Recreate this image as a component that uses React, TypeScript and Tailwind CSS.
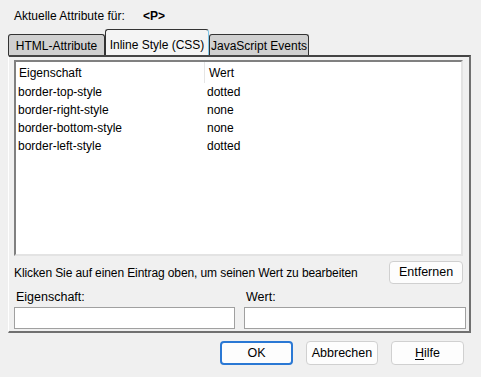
const rows = [
  { name: "border-top-style", value: "dotted" },
  { name: "border-right-style", value: "none" },
  { name: "border-bottom-style", value: "none" },
  { name: "border-left-style", value: "dotted" },
];

const font = { fontFamily: '"Liberation Sans", Arial, sans-serif' };

const App = () => {
  return (
    <div
      className="relative w-[481px] h-[377px] bg-[#f0f0f0] text-[12px] text-black overflow-hidden whitespace-nowrap"
      style={font}
    >
      {/* header */}
      <div className="flex items-center h-[16px] mt-[8px] pl-[14px]">
        <span className="w-[129px]">Aktuelle Attribute für:</span>
        <span className="font-bold">&lt;P&gt;</span>
      </div>

      {/* tabs */}
      <div className="flex items-end h-[26px] mt-[5px] pl-[8px] relative z-10">
        <div className="h-[21px] w-[97px] flex items-center justify-center bg-[#d0d0d0] border border-b-0 border-[#333] rounded-t-[3px] text-[12px] pt-[2px]">
          HTML-Attribute
        </div>
        <div className="h-[26px] w-[104px] flex items-center justify-center bg-[#f4f4f4] border border-b-0 border-[#333] border-r-[#7fc6e8] rounded-t-[3px] text-[12px] pt-[5px]">
          Inline Style (CSS)
        </div>
        <div className="h-[21px] w-[100px] flex items-center justify-center bg-[#d0d0d0] border border-b-0 border-[#333] rounded-t-[3px] text-[12px] pt-[2px]">
          JavaScript Events
        </div>
      </div>

      {/* panel */}
      <div className="ml-[8px] w-[463px] h-[278px] border-t-[2px] border-t-[#444] border-l border-l-white border-r-[2px] border-r-[#707070] border-b-[2px] border-b-[#707070] px-[5px] pt-[3px]">
        {/* list */}
        <div className="w-[449px] h-[196px] bg-white border-t-[2px] border-t-[#808080] border-l-[2px] border-l-[#808080] border-r-[2px] border-r-[#e3e3e3] border-b-[2px] border-b-[#e3e3e3]">
          <div className="flex h-[21px] items-center">
            <div className="w-[189px] pl-[3px] h-full flex items-center border-r border-[#e5e5e5]">Eigenschaft</div>
            <div className="pl-[4px]">Wert</div>
          </div>
          {rows.map((row, index) => (
            <div key={index} className="flex h-[18px] items-center">
              <div className="w-[190px] pl-[2px]">{row.name}</div>
              <div className="pl-[1px]">{row.value}</div>
            </div>
          ))}
        </div>

        {/* hint + remove */}
        <div className="flex items-center justify-between h-[23px] mt-[5px] pr-[1px]">
          <span className="text-[12px] tracking-[-0.1px]">Klicken Sie auf einen Eintrag oben, um seinen Wert zu bearbeiten</span>
          <button className="w-[74px] h-[23px] bg-[#fdfdfd] border border-[#d0d0d0] rounded-[4px] text-[12.5px]">
            Entfernen
          </button>
        </div>

        {/* fields */}
        <div className="flex gap-[9px] mt-[4px]">
          <div className="flex flex-col">
            <span className="pl-[2px] h-[18px] text-[12.5px]">Eigenschaft:</span>
            <div className="w-[221px] h-[22px] bg-white border border-[#a0a0a0] mt-[1px]" />
          </div>
          <div className="flex flex-col">
            <span className="pl-[2px] h-[18px] text-[12.5px]">Wert:</span>
            <div className="w-[222px] h-[22px] bg-white border border-[#a0a0a0] mt-[1px]" />
          </div>
        </div>
      </div>

      {/* dialog buttons */}
      <div className="flex justify-end gap-[13px] mt-[8px] pr-[17px]">
        <button className="w-[73px] h-[24px] bg-[#fdfdfd] border-[2px] border-[#2a78d4] rounded-[4px] text-[12.5px]">
          OK
        </button>
        <button className="w-[72px] h-[24px] bg-[#fdfdfd] border border-[#d0d0d0] rounded-[4px] text-[12.5px]">
          Abbrechen
        </button>
        <button className="w-[73px] h-[24px] bg-[#fdfdfd] border border-[#d0d0d0] rounded-[4px] text-[12.5px]">
          <span className="underline underline-offset-2">H</span>ilfe
        </button>
      </div>
    </div>
  );
};

export default App;
